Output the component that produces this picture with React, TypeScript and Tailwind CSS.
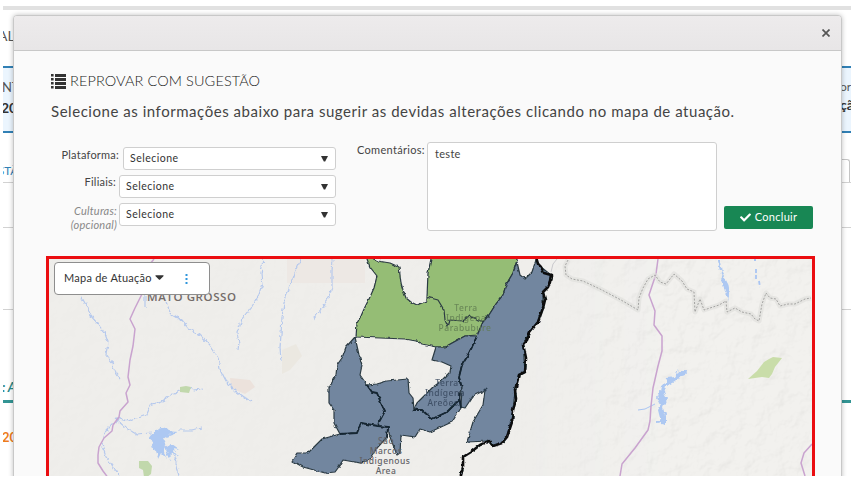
import type { ReactNode } from "react";
import { FaCheck, FaCaretDown } from "react-icons/fa";

function Caret() {
  return (
    <svg className="mt-px mr-px h-[6px] w-[7px]" viewBox="0 0 7 6">
      <path d="M0 0h7L4.2 5.6H2.8z" fill="#333" />
    </svg>
  );
}

function ListIcon() {
  return (
    <svg className="h-[15px] w-[15px]" viewBox="0 0 15 15" fill="#333">
      <path d="M0 0h2.6v2.6H0zM0 4h2.6v2.6H0zM0 8h2.6v2.6H0zM0 12h2.6v2.6H0zM4 0h11v3H4zM4 4h11v3H4zM4 8h11v3H4zM4 12h11v3H4z" />
    </svg>
  );
}

function Select({ className }: { className: string }) {
  return (
    <div className={`flex items-center justify-between rounded-[3px] border border-[#cfcfcf] bg-white px-[6px] ${className}`}>
      <span className="pt-px text-[10.5px] tracking-[0.5px] text-[#333]">Selecione</span>
      <Caret />
    </div>
  );
}

function Field({ label, children }: { label: ReactNode; children: ReactNode }) {
  return (
    <div className="flex justify-end">
      <div className="text-right text-[11px] leading-[14px] tracking-[0.22px] whitespace-nowrap text-[#444]">{label}</div>
      {children}
    </div>
  );
}

const BLUE = "#72869f";
const GREEN = "#95bd74";

const STATE_LINE =
  "M568 260l-3 6 1 9 6 4 11 2 17 8 21 11 17 10 1-12 4-10 5-9 7-4 5 7 6 2 8-10 8 7 5 8 7 3 1 20 5-13 4 11 15-5 7-4 1 11 8-4 7 4 9 2 4 5 4 2 3-17 4-11 4 5 6 1 4 7 8-2 7 0 10-5 6-1";

function TerritoryMap() {
  return (
    <svg className="block h-full w-full" viewBox="49 259 763 217" preserveAspectRatio="none">
      <defs>
        <filter id="relief" x="0" y="0" width="100%" height="100%">
          <feTurbulence type="fractalNoise" baseFrequency="0.06" numOctaves="4" seed="8" result="n" />
          <feDiffuseLighting in="n" surfaceScale="3" diffuseConstant="1.1" lightingColor="#fff">
            <feDistantLight azimuth="225" elevation="62" />
          </feDiffuseLighting>
        </filter>
        <filter id="rough" filterUnits="userSpaceOnUse" x="49" y="250" width="763" height="240">
          <feTurbulence type="fractalNoise" baseFrequency="0.2" numOctaves="2" seed="3" />
          <feDisplacementMap in="SourceGraphic" scale="6" xChannelSelector="R" yChannelSelector="G" />
        </filter>
        <filter id="coast" filterUnits="userSpaceOnUse" x="280" y="240" width="300" height="260">
          <feTurbulence type="fractalNoise" baseFrequency="0.2" numOctaves="2" seed="5" />
          <feDisplacementMap in="SourceGraphic" scale="3" xChannelSelector="R" yChannelSelector="G" />
        </filter>
        <linearGradient id="fade" x1="0" x2="1">
          <stop offset="0.6" stopColor="#fff" stopOpacity="0.1" />
          <stop offset="0.8" stopColor="#fff" stopOpacity="1" />
        </linearGradient>
        <mask id="reliefMask">
          <rect x="49" y="259" width="763" height="217" fill="url(#fade)" />
        </mask>
      </defs>
      <rect x="49" y="259" width="763" height="217" fill="#efeeeb" />
      <g mask="url(#reliefMask)">
        <rect x="49" y="259" width="763" height="217" filter="url(#relief)" opacity="0.18" />
      </g>
      <path d="M287 259h78v24h-78z" fill="#ede8e4" />
      <path d="M282 350l14-6 6 12-12 14-8 4z" fill="#ebe8e1" />
      <path d="M230 378l20 2 5 7-10 7-14-6z" fill="#ece2dc" />

      <g filter="url(#rough)" fill="none" stroke="#b6c9ed" strokeWidth="1.2">
        <path d="M81 296l5 9 4 10 7 8 8 10 3 8-2 14 6 8 3 10 5 6" />
        <path d="M165 302l6 12 10 6 8 9 12 6 9 10 8 12 2 12 6 12 10 10 15 11" />
        <path d="M263 259l-2 14 1 12-5 14-9 12-6 8-5 14 2 10-1 8" />
        <path d="M301 259l-7 16-5 14-5 14-2 14-1 18-1 12 1 14" />
        <path d="M333 259l-1 13 0 15-4 12-7 10-8 12" />
        <path d="M203 389l-10 1-8-2-11 6-12 7-12 4-5 11-9 2-8 3-11-3-5 7-8 8-2 12 4 12 7 9 6 10" />
        <path d="M117 420l9 8 10 6 16-1M178 430l12 0 13-2M166 445l7 9 4 12 2 10" />
        <path d="M145 296v11" />
      </g>
      <g filter="url(#rough)" fill="#adc8f2">
        <path d="M152 434l7-5 7-2 2 4 9 1-8 3-6 4 3 6-3 6 4 8-6-6-3 6-3-9-5-3 4-5-5-4z" />
        <path d="M165 446l7-1 7 5-6-1 6 8-8-5-1 8z" />
        <path d="M686 371l-8 0-3 5-8 1-1 5-5 3-1 7-3 5 4 8-3 5 2 8 1 6 4 1 0-10-2-7 4-9-3-6 2-7 8-4 3-4 8-2z" />
        <path d="M665 422l-9 1 0-2 8 0z" />
        <path d="M717 260l3 0 2 13 5 10 2 12-1 6-3-9-3-14z" />
      </g>
      <path d="M754 260h2M756 269v10M759 281l1 6" fill="none" stroke="#a9c5f3" strokeWidth="1.8" strokeDasharray="4 2" />
      <path d="M638 410l7-1 10-5" fill="none" stroke="#a9c5f3" />
      <path d="M139 461l9 0 4 5-1 8-4 3-3 0-1-7-4-2z" fill="#c1d8ac" />
      <path d="M180 387l6-1 5 1-2 6-9-1z" fill="#c1d8ac" />
      <path d="M748 379l9-8 7-9 5-3 4-2 9 1-7 9-3 7-3 4-7-1z" fill="#c9dda9" />

      <g fill="none" stroke="#c9a3cf" strokeWidth="1.5" strokeLinejoin="round">
        <path d="M154 259l-4 5M142 294l-7 14-5 11 5 10-2 17-3 14-2 17 2 8-4 8 2 9-8 9-1 6-6 8-1 6-8 7-5 9-1 8 0 8 5 8 6 8" />
        <path d="M658 259l-2 15-7 21 6 16-1 14 8 11 0 15-4 15-5 22-2 18-1 15-2 9-13 18-13 16-2 12 4 7" />
        <path d="M812 444l-8 9-3 10 4 13" />
      </g>
      <g fill="none" strokeLinejoin="round">
        <path d={STATE_LINE} stroke="#dededb" strokeWidth="5" opacity=".6" />
        <path d={STATE_LINE} stroke="#a4a4a2" strokeDasharray="2 1.5" />
        <path d="M557 259l-4 5-2 8" stroke="#c9c9cc" />
      </g>

      <g filter="url(#coast)" strokeLinejoin="round" stroke="#2b3a43" strokeWidth="1.2">
        <path
          fill={GREEN}
          d="M367 256V259L370 267 377 276 374 288 370 297 365 307 361 316 357 323 356 337 405 339 416 341 422 344 436 347 445 347 454 342 465 336 477 335 483 322 489 315 496 304 503 295 506 285 513 273 517 260V256H431V259L428 273 427 297 427 301 417 305 411 302 406 298 403 290 401 283 399 267 390 263 378 261z"
        />
        <path fill="none" d="M427 297L438 300 444 310 445 320 448 327 450 320 463 321 470 315 476 319 483 322" />
        <path
          fill={BLUE}
          d="M355 337L359 355 362 365 360 375 367 385 372 392 377 393 381 403 385 411 379 422 378 426 361 423 357 433 340 434 334 423 334 410 329 403 329 388 336 375 337 365 342 358 346 347z"
        />
        <path
          fill={BLUE}
          d="M367 385L377 384 387 381 408 379 409 393 413 398 414 410 422 410 432 419 447 412 459 400 461 408 452 422 441 427 430 432 420 429 415 437 401 435 400 453 397 455 390 437 388 427 378 426 379 422 385 411 381 403 377 393 372 392z"
        />
        <path
          fill={BLUE}
          d="M378 426L388 427 387 437 378 447 367 462 360 463 343 460 338 468 335 472 325 473 303 467 292 461 297 453 308 453 322 439 340 434 357 433 361 423z"
        />
        <path
          fill={BLUE}
          d="M436 347L445 347 454 342 465 336 477 336 472 347 467 357 462 365 459 377 462 388 459 400 447 412 432 419 422 410 414 409 417 403 427 393 433 387 440 382 450 372 451 366 442 362 432 360z"
        />
        <path
          fill={BLUE}
          d="M517 262L520 275 525 279 532 272 536 260 541 267 551 275 548 287 543 292 543 308 538 322 530 332 523 344 525 372 519 375 515 390 513 410 507 437 502 443 493 446 489 441 467 442 473 422 483 405 485 390 473 396 465 408 461 407 462 388 459 377 462 365 467 357 472 347 477 336 483 322 489 315 496 304 503 295 506 285 513 273z"
        />
        <g fill="none" strokeWidth="1.8" stroke="#152633">
          <path d="M367 385L372 392 377 393 381 403 385 411 379 422 378 426 361 423 357 433 340 434M378 426L388 427 387 437" />
          <path d="M414 410L422 410 432 419 447 412 459 400 459 393 461 408M477 336L472 347 467 357 462 365 459 377 462 388" />
        </g>
        <circle cx="485" cy="390" r="1.6" fill="#293d50" stroke="none" />
      </g>
      <path
        filter="url(#coast)"
        d="M536 257L538 264 541 267 544 273 551 275 550 281 548 287 543 292 545 300 543 308 538 322 530 332 527 340 523 344 526 358 525 372 519 375 515 390 516 400 513 410 512 422 507 437 502 443 493 446 489 441 480 445 471 452 463 457 463 467 460 478"
        fill="none"
        stroke="#080b0e"
        strokeWidth="2.6"
        strokeLinejoin="round"
      />

      <text x="147" y="301" fontSize="11.5" fontWeight="600" textLength="89" fill="#736b69" fontFamily="Open Sans, sans-serif">MATO GROSSO</text>
      <g fontFamily="Noto Sans, sans-serif" fontSize="8.5" fontWeight="500" textAnchor="middle" letterSpacing=".5">
        <g fill="#5f7b50" opacity=".8">
          <text x="466" y="311">Terra</text>
          <text x="466" y="321">Indigena</text>
          <text x="465" y="331">Parabubure</text>
        </g>
        <g fill="#34445a" opacity=".8">
          <text x="447" y="386">Terra</text>
          <text x="445" y="396">Indígena</text>
          <text x="443" y="406">Areões</text>
        </g>
        <g fill="#626267">
          <text x="386" y="444">São</text>
          <text x="386" y="454">Marcos</text>
          <text x="385" y="464">Indigenous</text>
          <text x="386" y="474">Area</text>
        </g>
      </g>
    </svg>
  );
}

function PageBehind() {
  return (
    <div className="h-full w-full border-t-4 border-[#e1e1e1] bg-white">
      <div className="flex h-[56px] items-center">
        <span className="-ml-[5px] pb-[6px] text-[14px] text-[#555]">AL</span>
      </div>
      <div className="flex h-[67px] justify-between border-y-2 border-[#3180b5] bg-[#ebf5fe] pt-[9px] leading-[20px]">
        <div className="-ml-px text-[13px] text-[#555]">
          <div>NT</div>
          <div className="-ml-px mt-px text-[14px] font-bold text-[#333]">20</div>
        </div>
        <div className="w-[11px] overflow-hidden text-[12px] text-[#555]">
          <div>or</div>
          <div className="-mt-[2px] text-[14px] font-bold text-[#333]">ção</div>
        </div>
      </div>
      <div className="flex h-[50px] items-end justify-between border-b border-[#d2d2d2]">
        <span className="-ml-[5px] pb-[3px] text-[11.5px] text-[#3180b5]">STÃO</span>
        <div className="mr-px h-[23px] w-[60px] rounded-t-[3px] border border-b-0 border-[#c5c5c5]" />
      </div>
      <div className="h-[45px] border-b border-[#d2d2d2]" />
      <div className="h-[82px] border-b border-[#d2d2d2]" />
      <div className="flex h-[93px] items-end border-b-[3px] border-[#339594]">
        <span className="-ml-px pb-[3px] text-[13px] font-bold whitespace-pre text-[#29898b] italic">: A</span>
      </div>
      <div className="-ml-px pt-[25px] text-[13px] font-bold text-[#ed7d1c]">20</div>
    </div>
  );
}

export default function App() {
  return (
    <main className="h-[483px] w-[851px] overflow-hidden bg-white pt-[6px] pl-[3px] font-[Lato,'Open_Sans',sans-serif]">
      <div className="relative h-[470px] w-[848px] overflow-hidden">
        <PageBehind />
        <section className="absolute top-[9px] left-[10px] h-[480px] w-[829px] rounded-t-[4px] border border-[#c8c8c8] bg-[#fafafa] shadow-[0_0_5px_rgba(0,0,0,0.25)]">
          <header className="flex h-[35px] items-center justify-end rounded-t-[3px] border-b border-[#c8c8c8] bg-gradient-to-b from-[#edebec] to-[#e8e6e7] pr-[11px]">
            <svg className="mb-px h-[8px] w-[8px]" viewBox="0 0 8 8">
              <path d="M.5.5l7 7M7.5.5l-7 7" stroke="#555" strokeWidth="1.7" />
            </svg>
          </header>
          <div className="pt-[20px] pl-[37px]">
            <h1 className="flex h-[20px] items-center gap-[4px] text-[14.5px] font-light tracking-[0.1px] whitespace-nowrap text-[#222]">
              <ListIcon />
              REPROVAR COM SUGESTÃO
            </h1>
            <p className="mt-[9px] h-[23px] text-[15px] leading-[22px] tracking-[0.54px] whitespace-nowrap text-[#444]">
              Selecione as informações abaixo para sugerir as devidas alterações clicando no mapa de atuação.
            </p>
          </div>
          <div className="flex h-[108px] items-start pt-[19px]">
            <div className="flex w-[322px] flex-col gap-[5px] pt-[5px]">
              <Field label={<div className="mr-[4px] pt-px">Plataforma:</div>}>
                <Select className="h-[23px] w-[213px]" />
              </Field>
              <Field label={<div className="mr-[3px]">Filiais:</div>}>
                <Select className="h-[23px] w-[217px]" />
              </Field>
              <Field label={<div className="mr-[2px] pt-px text-[#888] italic">Culturas:<br />(opcional)</div>}>
                <Select className="h-[23px] w-[217px]" />
              </Field>
            </div>
            <div className="ml-[21px] w-[70px] text-[11px] tracking-[0.3px] text-[#444]">Comentários:</div>
            <textarea readOnly defaultValue="teste" className="block h-[89px] w-[290px] resize-none rounded-[3px] border border-[#cfcfcf] bg-white px-[7px] py-[3px] text-[11px] leading-[16px] tracking-[0.3px] text-[#444] outline-none" />
            <button className="mt-[64px] ml-[7px] flex h-[23px] w-[89px] items-center justify-center gap-[4px] rounded-[2px] bg-[#188754] text-[11px] tracking-[0.3px] text-white">
              <FaCheck className="h-[11px] w-[11px]" />
              Concluir
            </button>
          </div>
          <div className="relative mt-[25px] ml-[32px] h-[223px] w-[769px] border-[3px] border-b-0 border-[#eb0d10]">
            <div className="h-[217px]">
              <TerritoryMap />
            </div>
            <div className="absolute top-[3px] left-[5px] flex h-[33px] w-[156px] items-center rounded-[4px] border border-[#8e8e8e] bg-white pl-[9px] text-[11px] whitespace-nowrap text-[#333]">
              <span className="tracking-[0.25px]">Mapa de Atuação</span>
              <FaCaretDown className="mb-[3px] ml-[2px] h-[14px] w-[11px]" />
              <svg className="ml-[20px] h-[10px] w-[3px]" viewBox="0 0 3 10" fill="#2f96dc">
                <path d="M.5 0h2v2h-2zM.5 4h2v2h-2zM.5 8h2v2h-2z" />
              </svg>
            </div>
          </div>
        </section>
      </div>
    </main>
  );
}
